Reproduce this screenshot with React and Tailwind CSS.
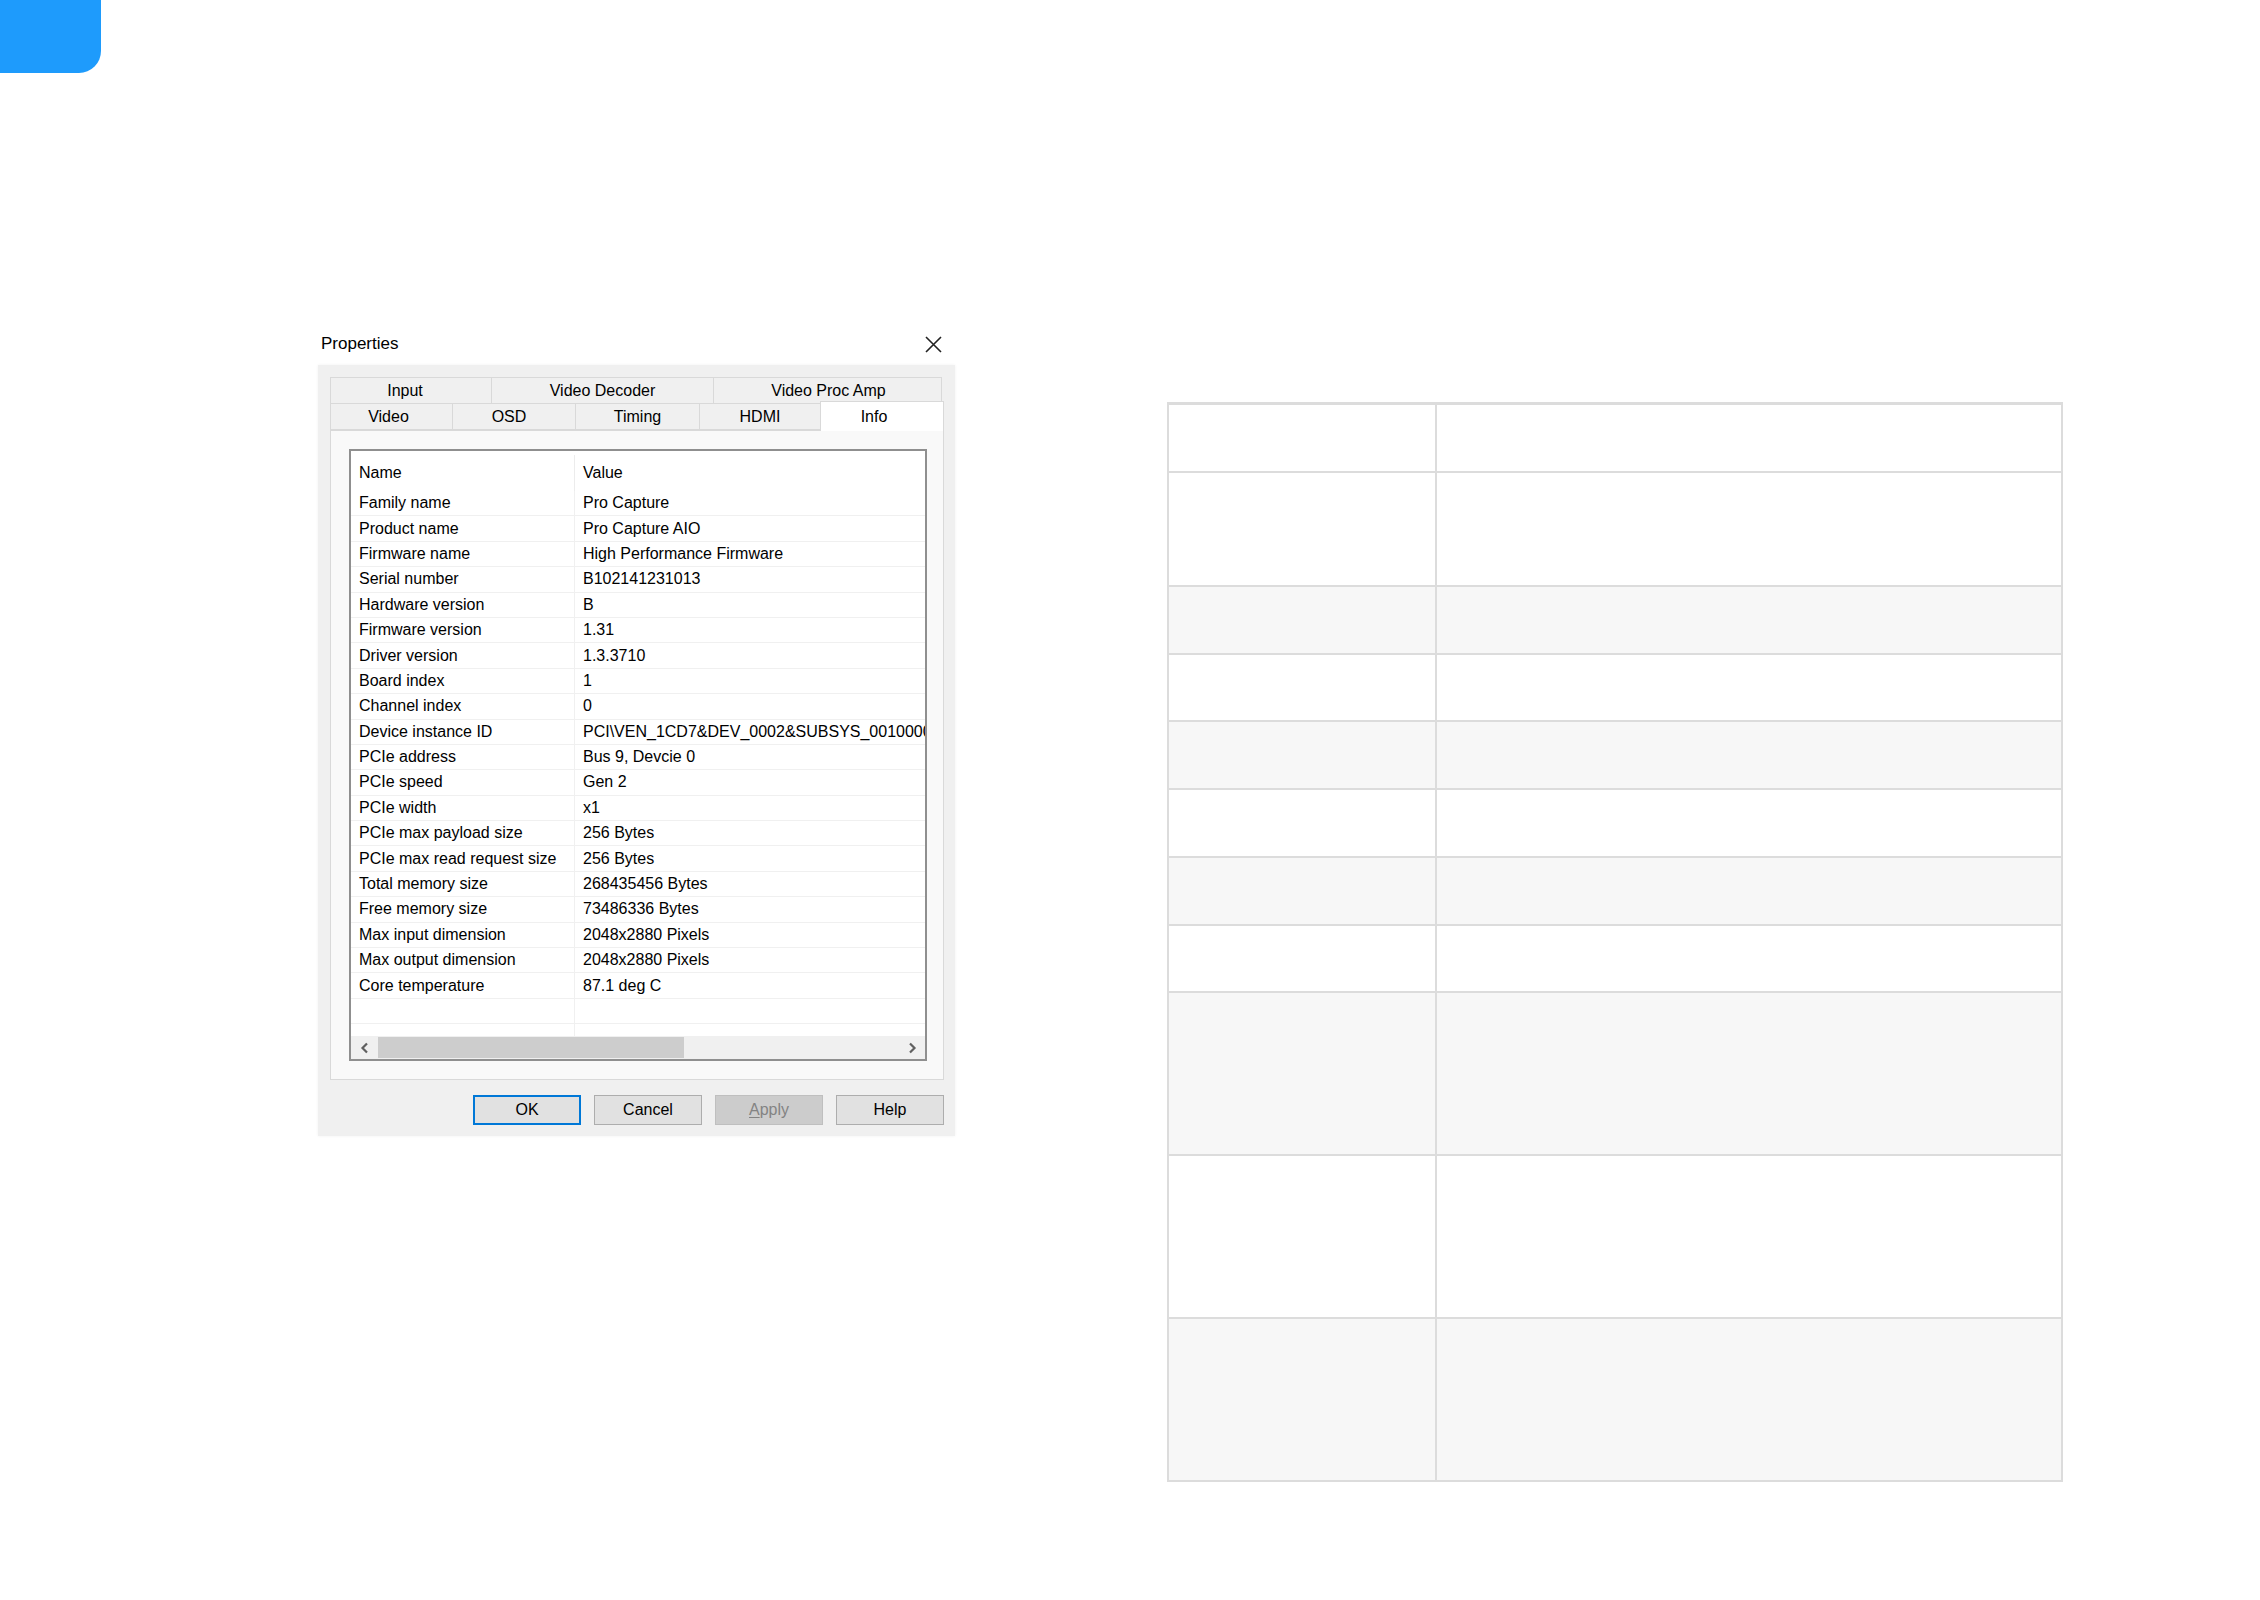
import React from "react";

const rows = [
  ["Family name", "Pro Capture"],
  ["Product name", "Pro Capture AIO"],
  ["Firmware name", "High Performance Firmware"],
  ["Serial number", "B102141231013"],
  ["Hardware version", "B"],
  ["Firmware version", "1.31"],
  ["Driver version", "1.3.3710"],
  ["Board index", "1"],
  ["Channel index", "0"],
  ["Device instance ID", "PCI\\VEN_1CD7&DEV_0002&SUBSYS_001000014&REV_00"],
  ["PCIe address", "Bus 9, Devcie 0"],
  ["PCIe speed", "Gen 2"],
  ["PCIe width", "x1"],
  ["PCIe max payload size", "256 Bytes"],
  ["PCIe max read request size", "256 Bytes"],
  ["Total memory size", "268435456 Bytes"],
  ["Free memory size", "73486336 Bytes"],
  ["Max input dimension", "2048x2880 Pixels"],
  ["Max output dimension", "2048x2880 Pixels"],
  ["Core temperature", "87.1 deg C"],
];

const tableRows = [
  { h: "h-[66px]", gray: false },
  { h: "h-[114px]", gray: false },
  { h: "h-[68px]", gray: true },
  { h: "h-[67px]", gray: false },
  { h: "h-[68px]", gray: true },
  { h: "h-[68px]", gray: false },
  { h: "h-[68px]", gray: true },
  { h: "h-[67px]", gray: false },
  { h: "h-[163px]", gray: true },
  { h: "h-[163px]", gray: false },
  { h: "h-[163px]", gray: true },
];

function Tab({ label, w, extra = "" }) {
  return (
    <div
      className={`${w} ${extra} h-full flex items-center justify-center border border-[#d9d9d9] -ml-px first:ml-0 bg-[#f0f0f0] text-[16px] text-black`}
    >
      {label}
    </div>
  );
}

function Chevron({ dir }) {
  return (
    <svg width="10" height="12" viewBox="0 0 10 12">
      {dir === "left" ? (
        <path d="M7 1.5 L2.5 6 L7 10.5" fill="none" stroke="#606060" strokeWidth="2.2" />
      ) : (
        <path d="M3 1.5 L7.5 6 L3 10.5" fill="none" stroke="#606060" strokeWidth="2.2" />
      )}
    </svg>
  );
}

function Button({ children, kind }) {
  let cls = "bg-[#e1e1e1] border border-[#adadad] text-black";
  if (kind === "ok") cls = "bg-[#e1e1e1] border-2 border-[#0078d7] text-black";
  if (kind === "disabled") cls = "bg-[#cccccc] border border-[#bfbfbf] text-[#838383]";
  return (
    <div className={`w-[108px] h-[30px] flex items-center justify-center text-[16px] ${cls}`}>
      {children}
    </div>
  );
}

export default function App() {
  return (
    <div className="w-[2260px] h-[1600px] bg-white overflow-hidden font-['Liberation_Sans',Arial,sans-serif]">
      <div className="w-[101px] h-[73px] bg-[#1e9bfc] rounded-br-[22px]" />
      <div className="flex items-start mt-[255px]">
        {/* Dialog */}
        <div className="ml-[318px] w-[637px] shrink-0">
          <div className="h-[30px] flex items-center justify-between pl-[3px] pr-[13px] pt-[2px]">
            <span className="text-[17px] text-black">Properties</span>
            <svg width="17" height="17" viewBox="0 0 17 17">
              <path d="M1 1 L16 16 M16 1 L1 16" stroke="#222" strokeWidth="1.6" fill="none" />
            </svg>
          </div>
          <div className="mt-[7px] h-[771px] bg-[#f0f0f0] pt-[12px] pl-[12px] pr-[11px] flex flex-col shadow-[0_0_3px_rgba(0,0,0,0.06)]">
            {/* tabs */}
            <div className="w-[614px] flex flex-col">
              <div className="flex h-[27px]">
                <Tab label="Input" w="w-[162px]" extra="pr-[12px]" />
                <Tab label="Video Decoder" w="w-[223px]" />
                <Tab label="Video Proc Amp" w="w-[229px]" extra="pl-[2px]" />
              </div>
              <div className="flex h-[27px] -mt-px items-end relative z-10">
                <Tab label="Video" w="w-[123px]" extra="pr-[6px]" />
                <Tab label="OSD" w="w-[124px]" extra="pr-[10px]" />
                <Tab label="Timing" w="w-[125px]" />
                <Tab label="HDMI" w="w-[122px]" />
                <div className="w-[124px] h-[30px] -ml-px -mb-px flex items-start justify-center pt-[3px] pr-[16px] bg-white border-x border-t border-[#d9d9d9] text-[16px] text-black">
                  Info
                </div>
              </div>
            </div>
            {/* tab content */}
            <div className="w-[614px] h-[650px] border border-[#d9d9d9] bg-[#f9f9f9] pt-[18px] pl-[18px]">
              <div className="w-[578px] h-[612px] border-2 border-[#8f8f8f] bg-white flex flex-col overflow-hidden text-[16px] text-black">
                <div className="h-[40px] flex shrink-0 pt-[4px]">
                  <div className="w-[224px] pl-[8px] flex items-center border-r border-[#ececec]">Name</div>
                  <div className="flex-1 pl-[8px] flex items-center">Value</div>
                </div>
                {rows.map(([n, v]) => (
                  <div key={n} className="h-[25.4px] flex shrink-0 border-b border-[#f0f0f0]">
                    <div className="w-[224px] pl-[8px] flex items-center border-r border-[#f0f0f0] whitespace-nowrap">
                      {n}
                    </div>
                    <div className="flex-1 pl-[8px] flex items-center whitespace-nowrap overflow-hidden">
                      {v}
                    </div>
                  </div>
                ))}
                <div className="flex-1 flex flex-col overflow-hidden">
                  <div className="h-[25.4px] flex shrink-0 border-b border-[#f0f0f0]">
                    <div className="w-[224px] border-r border-[#f0f0f0]" />
                    <div className="flex-1" />
                  </div>
                  <div className="flex-1 flex">
                    <div className="w-[224px] border-r border-[#f0f0f0]" />
                    <div className="flex-1" />
                  </div>
                </div>
                <div className="h-[23px] shrink-0 bg-[#f0f0f0] flex items-center">
                  <div className="w-[27px] h-full flex items-center justify-center">
                    <Chevron dir="left" />
                  </div>
                  <div className="w-[306px] h-[21px] bg-[#cdcdcd]" />
                  <div className="flex-1" />
                  <div className="w-[26px] h-full flex items-center justify-center">
                    <Chevron dir="right" />
                  </div>
                </div>
              </div>
            </div>
            {/* buttons */}
            <div className="mt-[15px] flex justify-end gap-[13px] pr-[0px]">
              <Button kind="ok">OK</Button>
              <Button>Cancel</Button>
              <Button kind="disabled">
                <span>
                  <span className="underline underline-offset-2">A</span>pply
                </span>
              </Button>
              <Button>Help</Button>
            </div>
          </div>
        </div>

        {/* Right table */}
        <div className="ml-[212px] mt-[74px] w-[896px] shrink-0 border-2 border-t-[3px] border-[#dcdcdc]">
          {tableRows.map((r, i) => (
            <div
              key={i}
              className={`${r.h} flex ${i > 0 ? "border-t-2 border-[#dcdcdc]" : ""} ${r.gray ? "bg-[#f7f7f7]" : "bg-white"}`}
            >
              <div className="w-[268px] border-r-2 border-[#dcdcdc]" />
              <div className="flex-1" />
            </div>
          ))}
        </div>
      </div>
    </div>
  );
}
